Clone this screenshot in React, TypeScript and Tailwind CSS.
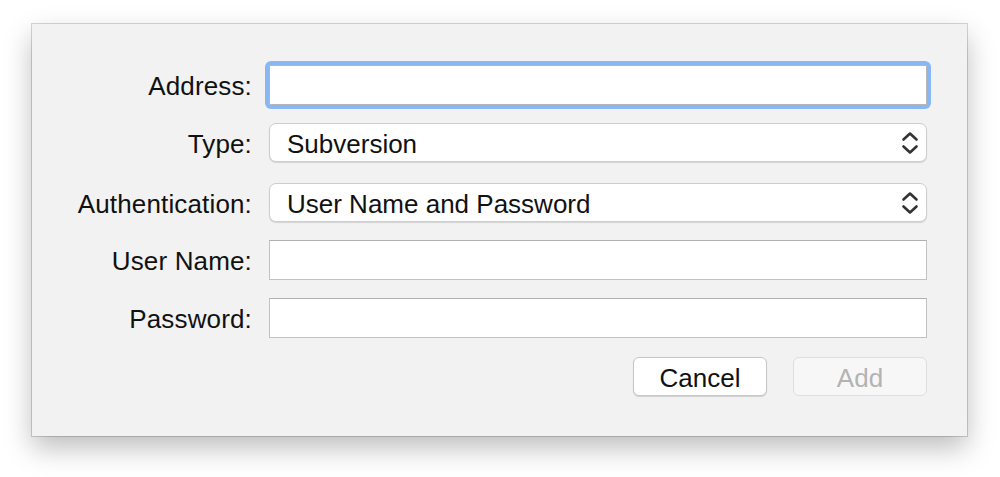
import React from "react";

function Chevrons() {
  return (
    <svg width="18" height="26" viewBox="0 0 18 26" fill="none" className="shrink-0">
      <path d="M2.5 9.5 L9 3.5 L15.5 9.5" stroke="#333" strokeWidth="2.6" strokeLinecap="round" strokeLinejoin="round" />
      <path d="M2.5 16.5 L9 22.5 L15.5 16.5" stroke="#333" strokeWidth="2.6" strokeLinecap="round" strokeLinejoin="round" />
    </svg>
  );
}

function Row({
  label,
  className,
  children,
}: {
  label: string;
  className?: string;
  children: React.ReactNode;
}) {
  return (
    <div className={`flex items-center ${className ?? ""}`}>
      <div className="w-[220px] pt-[2px] text-right text-[26px] leading-none tracking-[0.15px] text-[#111]">{label}</div>
      <div className="ml-[17px] w-[658px]">{children}</div>
    </div>
  );
}

function TextField({ focused }: { focused?: boolean }) {
  if (focused) {
    return (
      <div className="-m-[4px] rounded-[6px] bg-[#89b7f4] p-[4px]">
        <div className="h-[40px] border border-[#b5b5b5] bg-white" />
      </div>
    );
  }
  return <div className="h-[40px] border border-[#c2c2c2] border-t-[#b0b0b0] bg-white" />;
}

function Select({ value }: { value: string }) {
  return (
    <div className="flex h-[39px] items-center justify-between rounded-[7px] border border-[#cdcdcd] bg-white pl-[17px] pr-[7px] shadow-[0_1px_1px_rgba(0,0,0,0.12)]">
      <span className="pt-[2px] text-[26px] leading-none text-[#111]">{value}</span>
      <Chevrons />
    </div>
  );
}

export default function App() {
  return (
    <div
      className="h-[477px] w-[1000px] overflow-hidden bg-white"
      style={{ fontFamily: '"Liberation Sans", Arial, sans-serif' }}
    >
      <div className="ml-[32px] mt-[24px] h-[412px] w-[935px] bg-[#f2f2f2] shadow-[0_0_0_1px_rgba(0,0,0,0.16),0_12px_26px_rgba(0,0,0,0.26)]">
        <div className="flex flex-col pt-[41px]">
          <Row label="Address:">
            <TextField focused />
          </Row>
          <Row label="Type:" className="mt-[18px]">
            <Select value="Subversion" />
          </Row>
          <Row label="Authentication:" className="mt-[21px]">
            <Select value="User Name and Password" />
          </Row>
          <Row label="User Name:" className="mt-[18px]">
            <TextField />
          </Row>
          <Row label="Password:" className="mt-[18px]">
            <TextField />
          </Row>
          <div className="mt-[19px] flex justify-end gap-[26px] pr-[40px]">
            <button className="h-[39px] w-[134px] rounded-[6px] border border-[#c6c6c6] bg-white pt-[2px] text-[26px] leading-none text-[#111] shadow-[0_1px_1px_rgba(0,0,0,0.14)]">
              Cancel
            </button>
            <button className="h-[39px] w-[134px] rounded-[6px] border border-[#dedede] bg-[#f7f7f7] pt-[2px] text-[26px] leading-none text-[#b3b3b3]">
              Add
            </button>
          </div>
        </div>
      </div>
    </div>
  );
}
